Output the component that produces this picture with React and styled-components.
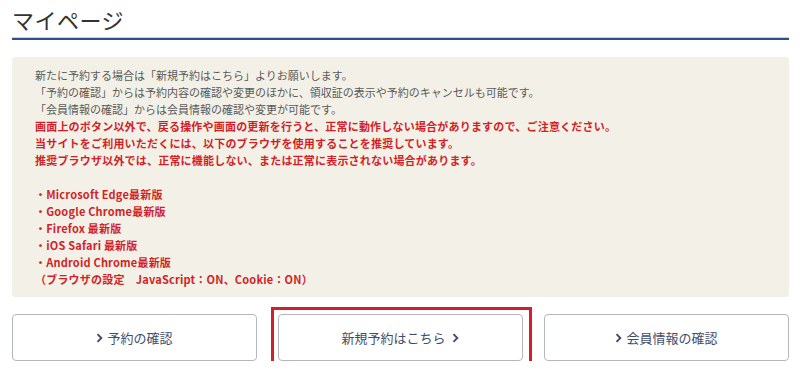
import React from "react";
import styled, { createGlobalStyle } from "styled-components";

const GlobalStyle = createGlobalStyle`
  html, body { margin: 0; padding: 0; background: #ffffff; overflow: hidden; }
  body {
    font-family: "Noto Sans CJK JP", "Noto Sans", "Liberation Sans", sans-serif;
    color: #555;
  }
`;

const Page = styled.div`
  width: 100%;
  box-sizing: border-box;
  padding: 0 11px 0 12px;
`;

const Header = styled.header`
  padding-top: 7px;
  padding-bottom: 7px;
  border-bottom: 2px solid #2f4e8d;
  box-shadow: 0 -1px 0 #c8d4ea inset;
`;

const Title = styled.h1`
  margin: 0;
  font-size: 22px;
  line-height: 24px;
  font-weight: 400;
  color: #333;
  letter-spacing: 0.5px;
`;

const Notice = styled.section`
  margin-top: 17px;
  background: #f3f1e7;
  border-radius: 3px;
  padding: 10px 23px 9px;
  font-size: 11px;
  line-height: 17px;
`;

const Line = styled.p`
  margin: 0;
  height: 17px;
  color: ${(p) => (p.$warn ? "#d21f27" : "#5a5a5a")};
  font-weight: ${(p) => (p.$warn ? 700 : 400)};
  letter-spacing: ${(p) => (p.$warn ? "0.2px" : "0")};
  white-space: nowrap;
`;

const Buttons = styled.nav`
  margin-top: 17px;
  display: grid;
  grid-template-columns: repeat(3, 1fr);
  column-gap: 21px;
  align-items: start;
`;

const Highlight = styled.div`
  margin: -7px -9px -4px -7px;
  padding: 4px 6px 1px 4px;
  border: 3px solid #d0202e;
`;

const Button = styled.a`
  height: 47px;
  box-sizing: border-box;
  border: 1px solid #b4b7bd;
  border-radius: 4px;
  background: #fff;
  display: flex;
  align-items: center;
  justify-content: center;
  gap: 4px;
  font-size: 13px;
  line-height: 16px;
  color: #3f4d6b;
  text-decoration: none;
`;

const Chevron = () => (
  <svg width="7" height="10" viewBox="0 0 7 10" aria-hidden="true">
    <path d="M1.5 1.2 L5.3 5 L1.5 8.8" fill="none" stroke="#3f4d6b" strokeWidth="1.9" />
  </svg>
);

const warnLines = [
  "画面上のボタン以外で、戻る操作や画面の更新を行うと、正常に動作しない場合がありますので、ご注意ください。",
  "当サイトをご利用いただくには、以下のブラウザを使用することを推奨しています。",
  "推奨ブラウザ以外では、正常に機能しない、または正常に表示されない場合があります。",
  "",
  "・Microsoft Edge最新版",
  "・Google Chrome最新版",
  "・Firefox 最新版",
  "・iOS Safari 最新版",
  "・Android Chrome最新版",
  "（ブラウザの設定　JavaScript：ON、Cookie：ON）",
];

export default function App() {
  return (
    <>
      <GlobalStyle />
      <Page>
        <Header>
          <Title>マイページ</Title>
        </Header>
        <Notice>
          <Line>新たに予約する場合は「新規予約はこちら」よりお願いします。</Line>
          <Line>「予約の確認」からは予約内容の確認や変更のほかに、領収証の表示や予約のキャンセルも可能です。</Line>
          <Line>「会員情報の確認」からは会員情報の確認や変更が可能です。</Line>
          {warnLines.map((t, i) => (
            <Line key={i} $warn>
              {t}
            </Line>
          ))}
        </Notice>
        <Buttons>
          <Button href="#">
            <Chevron />
            予約の確認
          </Button>
          <Highlight>
            <Button href="#">
              新規予約はこちら&nbsp;
              <Chevron />
            </Button>
          </Highlight>
          <Button href="#">
            <Chevron />
            会員情報の確認
          </Button>
        </Buttons>
      </Page>
    </>
  );
}
